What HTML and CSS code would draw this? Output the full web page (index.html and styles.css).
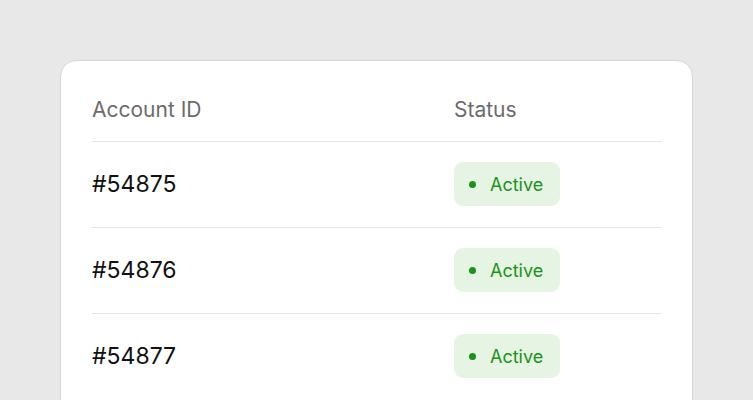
FILE: index.html
```html
<!DOCTYPE html>
<html>
<head>
<meta charset="utf-8">
<link rel="stylesheet" href="styles.css">
</head>
<body>
<div class="card">
  <div class="row head">
    <div class="cell">Account ID</div>
    <div class="cell">Status</div>
  </div>
  <div class="row">
    <div class="cell id">#54875</div>
    <div class="cell"><span class="badge"><span class="dot"></span>Active</span></div>
  </div>
  <div class="row">
    <div class="cell id">#54876</div>
    <div class="cell"><span class="badge"><span class="dot"></span>Active</span></div>
  </div>
  <div class="row">
    <div class="cell id">#54877</div>
    <div class="cell"><span class="badge"><span class="dot"></span>Active</span></div>
  </div>
</div>
</body>
</html>
```
FILE: styles.css
```css
html, body {
  margin: 0;
  padding: 0;
  background: #e8e8e8;
  font-family: Inter, "Liberation Sans", sans-serif;
  overflow: hidden;
  height: 400px;
}
body {
  padding: 60px 60px 0 60px;
}
.card {
  width: 569px;
  min-height: 400px;
  background: #fff;
  border: 1px solid #d6d6d6;
  border-radius: 16px;
  padding: 31px 31px 0 31px;
}
.row {
  display: grid;
  grid-template-columns: 362px 1fr;
  align-items: center;
  box-sizing: border-box;
  height: 86px;
  padding: 20px 0 21px 0;
  border-top: 1px solid #e4e4e4;
}
.row.head {
  border-top: none;
  height: 49px;
  padding: 0 0 15px 0;
  font-size: 21px;
  color: #6b6b6b;
}
.id {
  font-size: 23px;
  color: #111;
}
.badge {
  display: inline-flex;
  align-items: center;
  height: 44px;
  box-sizing: border-box;
  padding: 0 17px 0 15px;
  border-radius: 9px;
  background: #e6f4e3;
  color: #1a931a;
  font-size: 18px;
  gap: 14px;
}
.dot {
  width: 7px;
  height: 7px;
  border-radius: 50%;
  background: #1a931a;
}
```
